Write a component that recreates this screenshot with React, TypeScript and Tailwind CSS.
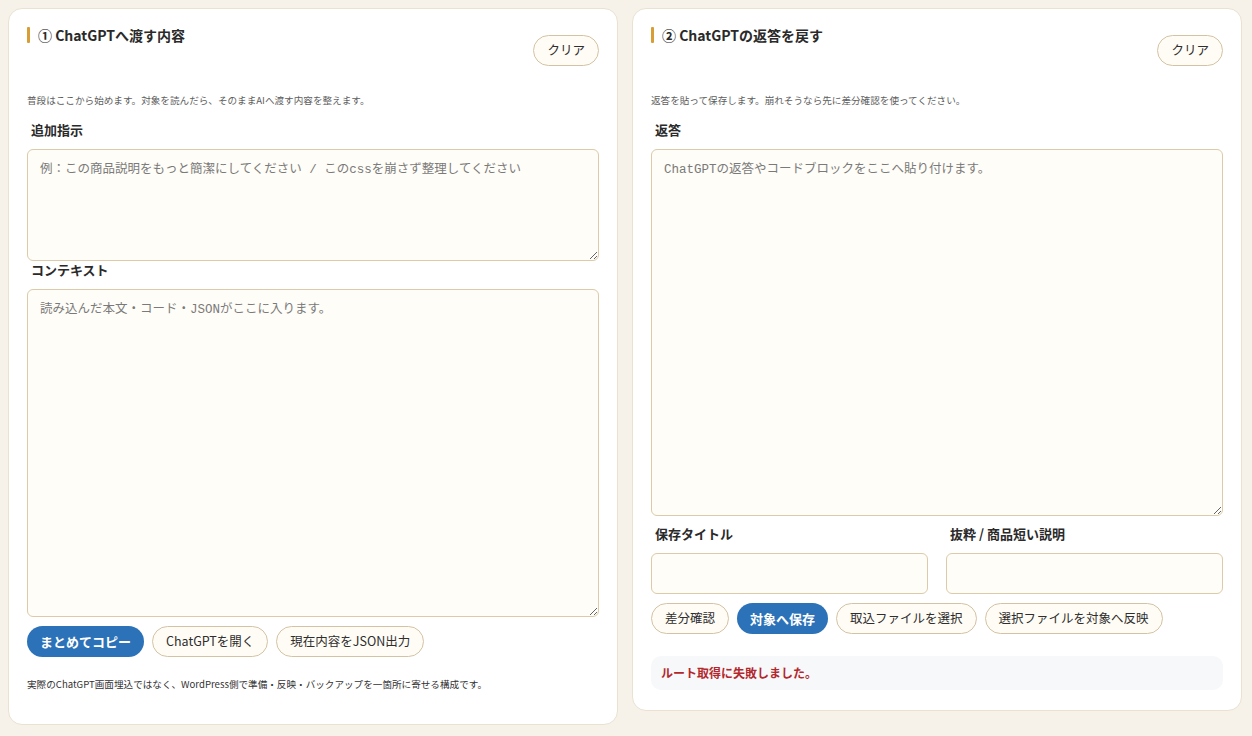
const sans = "font-['Noto_Sans_CJK_JP','Noto_Sans',sans-serif]";
const mono = "font-['Liberation_Mono','Noto_Sans_CJK_JP',monospace]";

function Heading({ text }: { text: string }) {
  return (
    <h2 className="flex items-center gap-2 text-[14px] leading-[18px] font-bold text-[#2a2a2a]">
      <span className="w-[3px] h-[16px] bg-[#d89d35] rounded-[1px]"></span>
      {text}
    </h2>
  )
}

function PillButton({ children, primary }: { children: string; primary?: boolean }) {
  return primary ? (
    <button className="h-[31px] px-[13px] rounded-full bg-[#2c72b8] text-white text-[13px] font-bold">{children}</button>
  ) : (
    <button className="h-[31px] px-[13px] rounded-full border border-[#d3c3a4] bg-[#fffcf5] text-[#2e2e2e] text-[12.5px]">
      {children}
    </button>
  )
}

function Label({ children }: { children: string }) {
  return <div className="pl-1 text-[13px] leading-[18px] font-bold text-[#2a2a2a]">{children}</div>
}

function Area({ h, placeholder }: { h: string; placeholder: string }) {
  return (
    <textarea
      className={`block w-full ${h} rounded-[6px] border border-[#dccaa8] bg-[#fffdf7] px-[12px] py-[10px] text-[12.5px] leading-[20px] text-[#333] placeholder:text-[#7a7a7a] outline-none ${mono}`}
      placeholder={placeholder}
    />
  )
}

function Header({ title }: { title: string }) {
  return (
    <div className="flex justify-between items-start">
      <Heading text={title} />
      <div className="mt-[9px]">
        <PillButton>クリア</PillButton>
      </div>
    </div>
  )
}

export default function App() {
  return (
    <div className={`min-h-[736px] bg-[#f6f2ea] pl-2 pr-[10px] py-2 ${sans}`}>
      <div className="flex items-start gap-[14px]">
        {/* 左：ChatGPTへ渡す */}
        <section className="flex-1 bg-white border border-[#eae1d0] rounded-[14px] px-[18px] pt-[17px] pb-[32px]">
          <Header title="① ChatGPTへ渡す内容" />
          <p className="mt-[27px] text-[9.6px] leading-[15px] text-[#5e5e5e]">
            普段はここから始めます。対象を読んだら、そのままAIへ渡す内容を整えます。
          </p>
          <div className="mt-[13px]">
            <Label>追加指示</Label>
          </div>
          <div className="mt-[10px]">
            <Area h="h-[112px]" placeholder="例：この商品説明をもっと簡潔にしてください / このcssを崩さず整理してください" />
          </div>
          <Label>コンテキスト</Label>
          <div className="mt-[10px]">
            <Area h="h-[328px]" placeholder="読み込んだ本文・コード・JSONがここに入ります。" />
          </div>
          <div className="flex gap-2 mt-[9px]">
            <PillButton primary>まとめてコピー</PillButton>
            <PillButton>ChatGPTを開く</PillButton>
            <PillButton>現在内容をJSON出力</PillButton>
          </div>
          <p className="mt-[20px] text-[9.6px] leading-[15px] text-[#333]">
            実際のChatGPT画面埋込ではなく、WordPress側で準備・反映・バックアップを一箇所に寄せる構成です。
          </p>
        </section>

        {/* 右：返答を戻す */}
        <section className="flex-1 bg-white border border-[#eae1d0] rounded-[14px] px-[18px] pt-[17px] pb-[20px]">
          <Header title="② ChatGPTの返答を戻す" />
          <p className="mt-[27px] text-[9.6px] leading-[15px] text-[#5e5e5e]">
            返答を貼って保存します。崩れそうなら先に差分確認を使ってください。
          </p>
          <div className="mt-[13px]">
            <Label>返答</Label>
          </div>
          <div className="mt-[10px]">
            <Area h="h-[367px]" placeholder="ChatGPTの返答やコードブロックをここへ貼り付けます。" />
          </div>
          <div className="grid grid-cols-2 gap-x-[18px] mt-[9px]">
            <div>
              <Label>保存タイトル</Label>
              <input className="mt-[10px] block w-full h-[41px] rounded-[6px] border border-[#dccaa8] bg-[#fffdf7] outline-none" />
            </div>
            <div>
              <Label>抜粋 / 商品短い説明</Label>
              <input className="mt-[10px] block w-full h-[41px] rounded-[6px] border border-[#dccaa8] bg-[#fffdf7] outline-none" />
            </div>
          </div>
          <div className="flex gap-2 mt-[9px]">
            <PillButton>差分確認</PillButton>
            <PillButton primary>対象へ保存</PillButton>
            <PillButton>取込ファイルを選択</PillButton>
            <PillButton>選択ファイルを対象へ反映</PillButton>
          </div>
          <div className="mt-[22px] h-[34px] flex items-center px-[10px] rounded-[10px] bg-[#f7f8fa] text-[12px] font-bold text-[#b3282d]">
            ルート取得に失敗しました。
          </div>
        </section>
      </div>
    </div>
  )
}
